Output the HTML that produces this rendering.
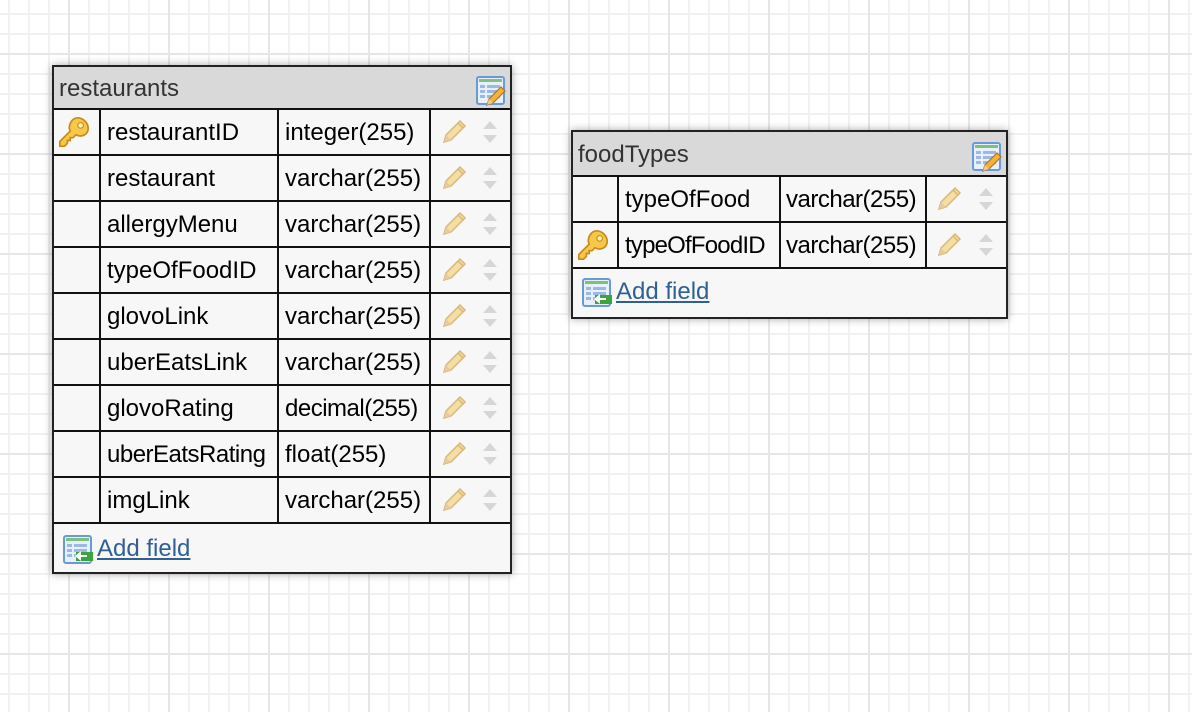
<!DOCTYPE html>
<html><head><meta charset="utf-8"><style>
*{box-sizing:border-box;margin:0;padding:0}
body{width:1192px;height:712px;overflow:hidden;position:relative;font-family:"Liberation Sans",sans-serif;
background-color:#fff;
background-image:
linear-gradient(to right,#e6e6e6 2px,transparent 2px),
linear-gradient(to bottom,#e6e6e6 2px,transparent 2px),
linear-gradient(to right,#f1f1f1 2px,transparent 2px),
linear-gradient(to bottom,#f1f1f1 2px,transparent 2px);
background-size:100px 100px,100px 100px,20px 20px,20px 20px;
background-position:68px 0,0 53px,8px 0,0 13px;}
.t{position:absolute;border:2px solid #222;background:#f7f7f7;box-shadow:0 0 8px rgba(0,0,0,.35)}
.h{position:absolute;left:0;right:0;top:0;height:43px;background:#d9d9d9;border-bottom:2px solid #111;font-size:24px;color:#333;padding:8px 0 0 5px}
.h svg{position:absolute;right:3px;top:8px}
.r{position:absolute;left:0;right:0;height:46px;border-bottom:2px solid #111;font-size:24px;color:#000}
.c{position:absolute;top:0;height:44px;border-right:2px solid #111;padding:9px 0 0 6px;white-space:nowrap}
.a{position:absolute;left:0;right:0;bottom:0;height:47px;font-size:24px;padding:10px 0 0 43px}
.a a{color:#2f5f93;text-decoration:underline}
.a svg{position:absolute;left:8px;top:9px}
.ic{position:absolute;top:7px}
</style></head><body>
<svg width="0" height="0" style="position:absolute">
<defs>
<symbol id="key" viewBox="0 0 36 36">
<path d="M22 3c5 0 11 5 11 11s-5 9-10 8l-3-1-3 3h-3v3h-3v3l-3 3H3v-5l11-11-1-3c0-6 4-11 9-11z" fill="#f5c84a" stroke="#c98a1a" stroke-width="1.8"/>
<circle cx="25" cy="11" r="3" fill="#fff3b0" stroke="#c98a1a" stroke-width="1.2"/>
</symbol>
<symbol id="pen" viewBox="0 0 30 30">
<path d="M5 25l2-7L21 4l5 5-14 14z" fill="#f3dfa3" stroke="#d8b777" stroke-width="1.5"/>
<path d="M5 25l2-7 5 5z" fill="#e7c9a4"/>
<path d="M19 6l5 5" stroke="#d8b777" stroke-width="1.5"/>
</symbol>
<symbol id="arr" viewBox="0 0 20 30">
<path d="M10 4l7 8H3z" fill="#d6d6d6"/><path d="M10 26l7-8H3z" fill="#d6d6d6"/>
</symbol>
<symbol id="tbl" viewBox="0 0 32 32">
<rect x="2" y="2" width="27" height="27" rx="2" fill="#e8f0fb" stroke="#6a9ad6" stroke-width="2"/>
<rect x="4" y="4" width="23" height="3" fill="#7cc27c"/>
<g fill="#9ab9e4"><rect x="5" y="10" width="5" height="3"/><rect x="12" y="10" width="13" height="3"/><rect x="5" y="15" width="5" height="3"/><rect x="12" y="15" width="13" height="3"/><rect x="5" y="20" width="5" height="3"/><rect x="12" y="20" width="13" height="3"/></g>
</symbol>
</defs></svg>

<div class="t" style="left:52px;top:65px;width:460px;height:509px">
<div class="h">restaurants
<svg width="32" height="32" viewBox="0 0 32 32"><use href="#tbl"/><path d="M12 30l2-6 12-12 4 4-12 12z" fill="#f0b43a" stroke="#b9731a" stroke-width="1.2"/><path d="M12 30l2-6 4 4z" fill="#e8c9a0"/></svg></div>
<div class="r" style="top:43px"><div class="c" style="left:0;width:47px"><svg class="ic" style="left:3px;top:5px" width="34" height="34"><use href="#key"/></svg></div><div class="c" style="left:47px;width:178px">restaurantID</div><div class="c" style="left:225px;width:152px">integer(255)</div><svg class="ic" style="left:385px" width="30" height="30"><use href="#pen"/></svg><svg class="ic" style="left:426px" width="20" height="30"><use href="#arr"/></svg></div>
<div class="r" style="top:89px"><div class="c" style="left:0;width:47px"></div><div class="c" style="left:47px;width:178px">restaurant</div><div class="c" style="left:225px;width:152px">varchar(255)</div><svg class="ic" style="left:385px" width="30" height="30"><use href="#pen"/></svg><svg class="ic" style="left:426px" width="20" height="30"><use href="#arr"/></svg></div>
<div class="r" style="top:135px"><div class="c" style="left:0;width:47px"></div><div class="c" style="left:47px;width:178px">allergyMenu</div><div class="c" style="left:225px;width:152px">varchar(255)</div><svg class="ic" style="left:385px" width="30" height="30"><use href="#pen"/></svg><svg class="ic" style="left:426px" width="20" height="30"><use href="#arr"/></svg></div>
<div class="r" style="top:181px"><div class="c" style="left:0;width:47px"></div><div class="c" style="left:47px;width:178px">typeOfFoodID</div><div class="c" style="left:225px;width:152px">varchar(255)</div><svg class="ic" style="left:385px" width="30" height="30"><use href="#pen"/></svg><svg class="ic" style="left:426px" width="20" height="30"><use href="#arr"/></svg></div>
<div class="r" style="top:227px"><div class="c" style="left:0;width:47px"></div><div class="c" style="left:47px;width:178px">glovoLink</div><div class="c" style="left:225px;width:152px">varchar(255)</div><svg class="ic" style="left:385px" width="30" height="30"><use href="#pen"/></svg><svg class="ic" style="left:426px" width="20" height="30"><use href="#arr"/></svg></div>
<div class="r" style="top:273px"><div class="c" style="left:0;width:47px"></div><div class="c" style="left:47px;width:178px">uberEatsLink</div><div class="c" style="left:225px;width:152px">varchar(255)</div><svg class="ic" style="left:385px" width="30" height="30"><use href="#pen"/></svg><svg class="ic" style="left:426px" width="20" height="30"><use href="#arr"/></svg></div>
<div class="r" style="top:319px"><div class="c" style="left:0;width:47px"></div><div class="c" style="left:47px;width:178px">glovoRating</div><div class="c" style="left:225px;width:152px;letter-spacing:-0.5px">decimal(255)</div><svg class="ic" style="left:385px" width="30" height="30"><use href="#pen"/></svg><svg class="ic" style="left:426px" width="20" height="30"><use href="#arr"/></svg></div>
<div class="r" style="top:365px"><div class="c" style="left:0;width:47px"></div><div class="c" style="left:47px;width:178px;letter-spacing:-0.5px">uberEatsRating</div><div class="c" style="left:225px;width:152px">float(255)</div><svg class="ic" style="left:385px" width="30" height="30"><use href="#pen"/></svg><svg class="ic" style="left:426px" width="20" height="30"><use href="#arr"/></svg></div>
<div class="r" style="top:411px"><div class="c" style="left:0;width:47px"></div><div class="c" style="left:47px;width:178px">imgLink</div><div class="c" style="left:225px;width:152px">varchar(255)</div><svg class="ic" style="left:385px" width="30" height="30"><use href="#pen"/></svg><svg class="ic" style="left:426px" width="20" height="30"><use href="#arr"/></svg></div>
<div class="a"><svg width="32" height="32" viewBox="0 0 32 32"><use href="#tbl"/><rect x="14" y="18" width="17" height="9" fill="#3aa63a"/><path d="M13 22l6-5v10z" fill="#fff"/><rect x="17" y="21" width="8" height="2" fill="#fff"/></svg><a>Add field</a></div>
</div>

<div class="t" style="left:571px;top:130px;width:437px;height:189px">
<div class="h" style="height:45px;padding-top:9px">foodTypes
<svg width="32" height="32" viewBox="0 0 32 32" style="top:9px"><use href="#tbl"/><path d="M12 30l2-6 12-12 4 4-12 12z" fill="#f0b43a" stroke="#b9731a" stroke-width="1.2"/><path d="M12 30l2-6 4 4z" fill="#e8c9a0"/></svg></div>
<div class="r" style="top:45px"><div class="c" style="left:0;width:46px"></div><div class="c" style="left:46px;width:162px">typeOfFood</div><div class="c" style="left:208px;width:146px;padding-left:5px;letter-spacing:-0.5px">varchar(255)</div><svg class="ic" style="left:361px" width="30" height="30"><use href="#pen"/></svg><svg class="ic" style="left:403px" width="20" height="30"><use href="#arr"/></svg></div>
<div class="r" style="top:91px"><div class="c" style="left:0;width:46px"><svg class="ic" style="left:3px;top:5px" width="34" height="34"><use href="#key"/></svg></div><div class="c" style="left:46px;width:162px;letter-spacing:-0.8px">typeOfFoodID</div><div class="c" style="left:208px;width:146px;padding-left:5px;letter-spacing:-0.5px">varchar(255)</div><svg class="ic" style="left:361px" width="30" height="30"><use href="#pen"/></svg><svg class="ic" style="left:403px" width="20" height="30"><use href="#arr"/></svg></div>
<div class="a" style="height:49px"><svg width="32" height="32" viewBox="0 0 32 32"><use href="#tbl"/><rect x="14" y="18" width="17" height="9" fill="#3aa63a"/><path d="M13 22l6-5v10z" fill="#fff"/><rect x="17" y="21" width="8" height="2" fill="#fff"/></svg><a>Add field</a></div>
</div>
</body></html>
